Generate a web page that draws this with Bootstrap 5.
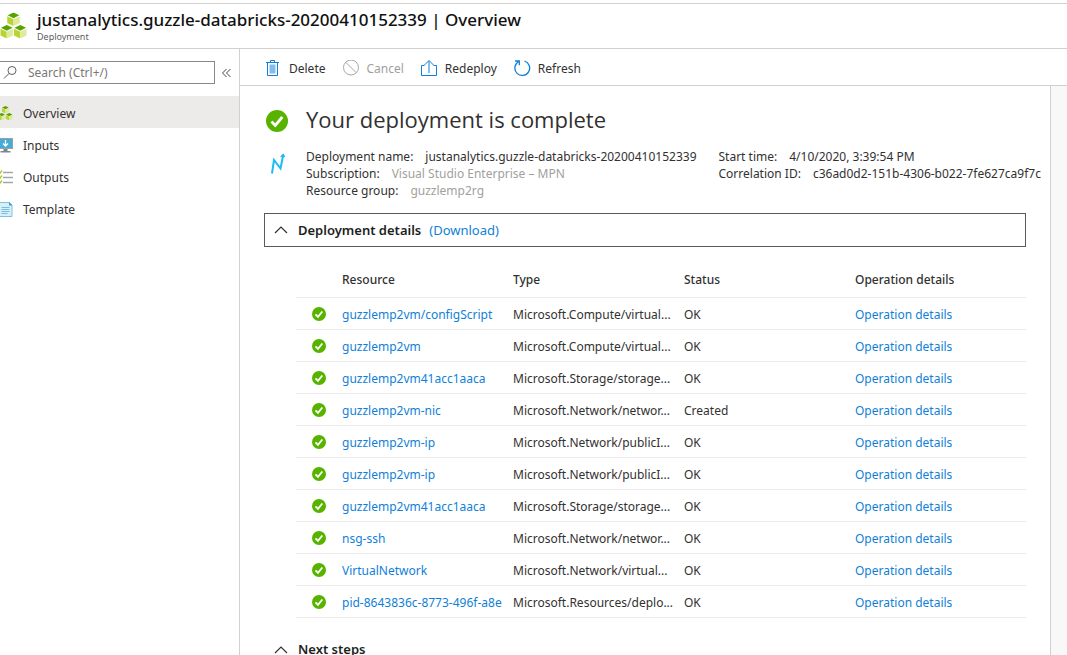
<!DOCTYPE html>
<html lang="en">
<head>
<meta charset="utf-8">
<meta name="viewport" content="width=device-width, initial-scale=1">
<title>Deployment | Overview</title>
<link href="https://cdn.jsdelivr.net/npm/bootstrap@5.3.0/dist/css/bootstrap.min.css" rel="stylesheet">
<style>
  :root { --line: #d2d0ce; --azure: #0f7fd8; --soft: #a19f9d; }
  body { font-family: "Noto Sans", "Open Sans", sans-serif; font-size: 12px; line-height: 17px; color: #323130; background: #fff; }
  a { color: var(--azure); text-decoration: none; }
  a:hover { text-decoration: underline; }
  svg { flex: none; display: block; }
  .blade-head { margin-top: 3px; height: 46px; border-top: 1px solid var(--line); border-bottom: 1px solid var(--line); gap: 10px; }
  .blade-title { font-size: 17px; line-height: 22px; font-weight: 500; color: #111; margin: 0; }
  .blade-kind { font-size: 9px; line-height: 12px; color: #605e5c; }
  .side { width: 240px; border-right: 1px solid var(--line); flex: none; }
  .search-row { padding: 12px 8px 12px 0; gap: 7px; }
  .search-field { border: 1px solid #8a8886; border-left: 0; height: 23px; padding-left: 3px; gap: 10px; }
  .search-field input { border: 0; outline: 0; background: none; min-width: 0; padding: 0; color: #323130; }
  .search-field input::placeholder { color: #7a7876; opacity: 1; }
  .side .nav-link { height: 32px; padding: 2px 0 0; gap: 10px; color: #323130; }
  .side .nav-link.active { background: #edebe9; }
  .tools { height: 37px; border-bottom: 1px solid var(--line); padding: 2px 25px 0; gap: 17px; }
  .tool { border: 0; background: none; padding: 0; gap: 7px; color: #323130; }
  .tool:disabled { color: var(--soft); }
  .pane { padding: 16px 24px 0; overflow: hidden; }
  .gutter { width: 17px; background: #f8f8f8; border-left: 1px solid var(--line); flex: none; }
  .state-title { font-family: "Open Sans", sans-serif; font-size: 22px; line-height: 34px; font-weight: 400; color: #323130; margin: 0; }
  .mark-col { width: 42px; padding-left: 2px; flex: none; }
  .facts { margin-top: 12px; white-space: nowrap; }
  .facts dl { margin-right: 22px; }
  .facts dl, .facts dd, .facts dt { margin-bottom: 0; font-weight: 400; }
  .facts dd { margin-left: 0; }
  .facts dl > div { gap: 12px; }
  .facts .muted { color: var(--soft); }
  .fold { height: 34px; border: 1px solid transparent; padding: 0 9px; gap: 8px; font-size: 13px; }
  .fold.boxed { border-color: #5c5a58; margin-top: 14px; }
  .fold h2 { font-size: 13px; line-height: 17px; margin: 0; }
  .fold button { border: 0; background: none; padding: 0; gap: 10px; color: #201f1e; }
  .result { padding-left: 32px; margin-top: 15px; margin-bottom: 15px; }
  .result table { table-layout: fixed; width: 100%; }
  .result th, .result td { height: 32px; padding: 2px 8px 0 0; border-bottom: 1px solid #edebe9; white-space: nowrap; overflow: hidden; vertical-align: middle; }
  .result th { height: 36px; font-weight: 500; color: #323130; }
  .result thead tr > th { height: 35px; padding-top: 0; }
  .result td.ico, .result th.ico { width: 46px; padding: 2px 0 0 16px; }
</style>
</head>
<body class="vh-100 overflow-hidden d-flex flex-column">
<svg class="d-none" aria-hidden="true">
  <symbol id="ok" viewBox="0 0 22 22"><circle cx="11" cy="11" r="11" fill="#57b300"/><path d="M5.5 11.5l3.8 4 7-8.5" fill="none" stroke="#fff" stroke-width="2.8"/></symbol>
  <symbol id="cube" viewBox="0 0 14 14"><path d="M.500 3.800L7 7V14L.500 10.800z" fill="#b8d432"/><path d="M13.500 3.800L7 7V14l6.500-3.200z" fill="#dfeb9b"/><path d="M7 0l6 2.900L7 5.900 1 2.900z" fill="#57a300"/></symbol>
  <symbol id="cubes" viewBox="0 0 28 28"><use href="#cube" x="7" y="0" width="14" height="14"/><use href="#cube" x="0" y="13" width="14" height="14"/><use href="#cube" x="14" y="13" width="14" height="14"/></symbol>
  <symbol id="up" viewBox="0 0 14 8"><path d="M1 7l6-6 6 6" fill="none" stroke="#323130" stroke-width="1.2"/></symbol>
</svg>

<header class="blade-head d-flex align-items-center flex-shrink-0">
  <svg width="27" height="28"><use href="#cubes"/></svg>
  <div>
    <h1 class="blade-title">justanalytics.guzzle-databricks-20200410152339 | Overview</h1>
    <div class="blade-kind">Deployment</div>
  </div>
</header>

<div class="d-flex flex-grow-1 overflow-hidden">
  <aside class="side">
    <div class="search-row d-flex align-items-center">
      <label class="search-field d-flex align-items-center flex-grow-1">
        <svg width="15" height="15" viewBox="0 0 15 15" fill="none" stroke="#605e5c"><circle cx="9" cy="5.500" r="4"/><path d="M6 8.500L1 13.500"/></svg>
        <input type="search" class="flex-grow-1" placeholder="Search (Ctrl+/)" aria-label="Search">
      </label>
      <button type="button" class="border-0 bg-transparent p-0" aria-label="Collapse menu">
        <svg width="9" height="10" viewBox="0 0 9 10" fill="none" stroke="#484644"><path d="M4.500 1l-4 4 4 4M8.500 1l-4 4 4 4"/></svg>
      </button>
    </div>
    <nav class="nav flex-column">
      <a class="nav-link active d-flex align-items-center" href="#"><svg width="13" height="15" viewBox="4 0 24 28"><use href="#cubes" width="28" height="28"/></svg>Overview</a>
      <a class="nav-link d-flex align-items-center" href="#"><svg width="13" height="15" viewBox="0 0 13 15"><path d="M0 0h13v11H0z" fill="#9aa0a3"/><path d="M0 1h12v9H0z" fill="#45acd8"/><path d="M5.500 2v6M3 5.500L5.500 8 8 5.500" fill="none" stroke="#fff" stroke-width="1.300"/><path d="M3.500 11h4v2H10.500v1.500H0.500V13h3z" fill="#7f8689"/></svg>Inputs</a>
      <a class="nav-link d-flex align-items-center" href="#"><svg width="13" height="14" viewBox="0 0 13 14"><path d="M3 2.500h10M3 7.500h10M3 12.500h10" stroke="#a3a7aa" stroke-width="1.300"/><path d="M-1 2l1 1.200L2 .500M-1 7l1 1.200 2-2.700M-1 12l1 1.200 2-2.700" stroke="#a4cc1f" fill="none" stroke-width="1.300"/></svg>Outputs</a>
      <a class="nav-link d-flex align-items-center" href="#"><svg width="13" height="15" viewBox="0 0 13 15"><path d="M-1 .500H9.500L12 3v11.500H-1z" fill="#d9eff8" stroke="#7cc3e0"/><path d="M9 0v3.500h3.500z" fill="#3a9fcf"/><path d="M1.500 5.500h8M1.500 7.500h8M1.500 9.500h8M1.500 11.500h6" stroke="#72bfe0"/></svg>Template</a>
    </nav>
  </aside>

  <main class="d-flex flex-column flex-grow-1 overflow-hidden">
    <div class="tools d-flex align-items-center flex-shrink-0" role="toolbar">
      <button type="button" class="tool d-flex align-items-center"><svg width="17" height="17" viewBox="0 0 17 17" fill="none" stroke="#0f7fd8"><path d="M2.500 3v12.500h10V3M1 2.500h13M5.500 2V.500h4V2"/><path d="M4.500 4.500h6v9h-6z" fill="#83bdec" stroke="none"/></svg>Delete</button>
      <button type="button" class="tool d-flex align-items-center" disabled><svg width="17" height="17" viewBox="0 0 17 17" fill="none" stroke="#a8a6a4"><circle cx="8" cy="7.500" r="7.500"/><path d="M2.700 2.200l10.600 10.600"/></svg>Cancel</button>
      <button type="button" class="tool d-flex align-items-center"><svg width="17" height="17" viewBox="0 0 17 17" fill="none" stroke="#0f7fd8"><path d="M3.500 5.500H.500v10h15v-10h-3M8 13V.800M3.500 5L8 .500 12.500 5"/></svg>Redeploy</button>
      <button type="button" class="tool d-flex align-items-center"><svg width="17" height="17" viewBox="0 0 17 17" fill="none" stroke="#0f7fd8" stroke-width="1.300"><path d="M10.500 1A7.400 7.400 0 1 1 4.300 1.800M1 1h4.300v4.300"/></svg>Refresh</button>
    </div>

    <div class="d-flex flex-grow-1 overflow-hidden">
      <section class="pane flex-grow-1">
        <div class="d-flex align-items-center">
          <div class="mark-col pt-1"><svg width="22" height="22"><use href="#ok"/></svg></div>
          <h2 class="state-title">Your deployment is complete</h2>
        </div>
        <div class="facts d-flex">
          <div class="mark-col"><svg width="20" height="28" viewBox="0 0 20 28" fill="none" stroke="#1cbcf5"><path d="M6 25.500L8 12l6.500 8.500L17 8" stroke-width="2"/><path d="M14.700 8.500l2.600-2.500 1.400 2.800z" fill="#1cbcf5"/></svg></div>
          <dl>
            <div class="d-flex"><dt>Deployment name:</dt><dd>justanalytics.guzzle-databricks-20200410152339</dd></div>
            <div class="d-flex"><dt>Subscription:</dt><dd class="muted">Visual Studio Enterprise – MPN</dd></div>
            <div class="d-flex"><dt>Resource group:</dt><dd class="muted">guzzlemp2rg</dd></div>
          </dl>
          <dl>
            <div class="d-flex"><dt>Start time:</dt><dd>4/10/2020, 3:39:54 PM</dd></div>
            <div class="d-flex"><dt>Correlation ID:</dt><dd>c36ad0d2-151b-4306-b022-7fe627ca9f7c</dd></div>
          </dl>
        </div>

        <div class="fold boxed d-flex align-items-center">
          <h2><button type="button" class="d-flex align-items-center fw-semibold"><svg width="14" height="8"><use href="#up"/></svg>Deployment details</button></h2>
          <a href="#">(Download)</a>
        </div>

        <div class="result">
          <table>
            <thead><tr><th class="ico"></th><th>Resource</th><th>Type</th><th>Status</th><th>Operation details</th></tr></thead>
            <tbody>
              <tr><td class="ico"><svg width="14" height="14"><use href="#ok"/></svg></td><td><a href="#">guzzlemp2vm/configScript</a></td><td>Microsoft.Compute/virtual...</td><td>OK</td><td><a href="#">Operation details</a></td></tr>
              <tr><td class="ico"><svg width="14" height="14"><use href="#ok"/></svg></td><td><a href="#">guzzlemp2vm</a></td><td>Microsoft.Compute/virtual...</td><td>OK</td><td><a href="#">Operation details</a></td></tr>
              <tr><td class="ico"><svg width="14" height="14"><use href="#ok"/></svg></td><td><a href="#">guzzlemp2vm41acc1aaca</a></td><td>Microsoft.Storage/storage...</td><td>OK</td><td><a href="#">Operation details</a></td></tr>
              <tr><td class="ico"><svg width="14" height="14"><use href="#ok"/></svg></td><td><a href="#">guzzlemp2vm-nic</a></td><td>Microsoft.Network/networ...</td><td>Created</td><td><a href="#">Operation details</a></td></tr>
              <tr><td class="ico"><svg width="14" height="14"><use href="#ok"/></svg></td><td><a href="#">guzzlemp2vm-ip</a></td><td>Microsoft.Network/publicI...</td><td>OK</td><td><a href="#">Operation details</a></td></tr>
              <tr><td class="ico"><svg width="14" height="14"><use href="#ok"/></svg></td><td><a href="#">guzzlemp2vm-ip</a></td><td>Microsoft.Network/publicI...</td><td>OK</td><td><a href="#">Operation details</a></td></tr>
              <tr><td class="ico"><svg width="14" height="14"><use href="#ok"/></svg></td><td><a href="#">guzzlemp2vm41acc1aaca</a></td><td>Microsoft.Storage/storage...</td><td>OK</td><td><a href="#">Operation details</a></td></tr>
              <tr><td class="ico"><svg width="14" height="14"><use href="#ok"/></svg></td><td><a href="#">nsg-ssh</a></td><td>Microsoft.Network/networ...</td><td>OK</td><td><a href="#">Operation details</a></td></tr>
              <tr><td class="ico"><svg width="14" height="14"><use href="#ok"/></svg></td><td><a href="#">VirtualNetwork</a></td><td>Microsoft.Network/virtual...</td><td>OK</td><td><a href="#">Operation details</a></td></tr>
              <tr><td class="ico"><svg width="14" height="14"><use href="#ok"/></svg></td><td><a href="#">pid-8643836c-8773-496f-a8e</a></td><td>Microsoft.Resources/deplo...</td><td>OK</td><td><a href="#">Operation details</a></td></tr>
            </tbody>
          </table>
        </div>

        <div class="fold d-flex align-items-center">
          <h2><button type="button" class="d-flex align-items-center fw-semibold"><svg width="14" height="8"><use href="#up"/></svg>Next steps</button></h2>
        </div>
      </section>
      <div class="gutter"></div>
    </div>
  </main>
</div>
<script src="https://cdn.jsdelivr.net/npm/bootstrap@5.3.0/dist/js/bootstrap.bundle.min.js"></script>
</body>
</html>
